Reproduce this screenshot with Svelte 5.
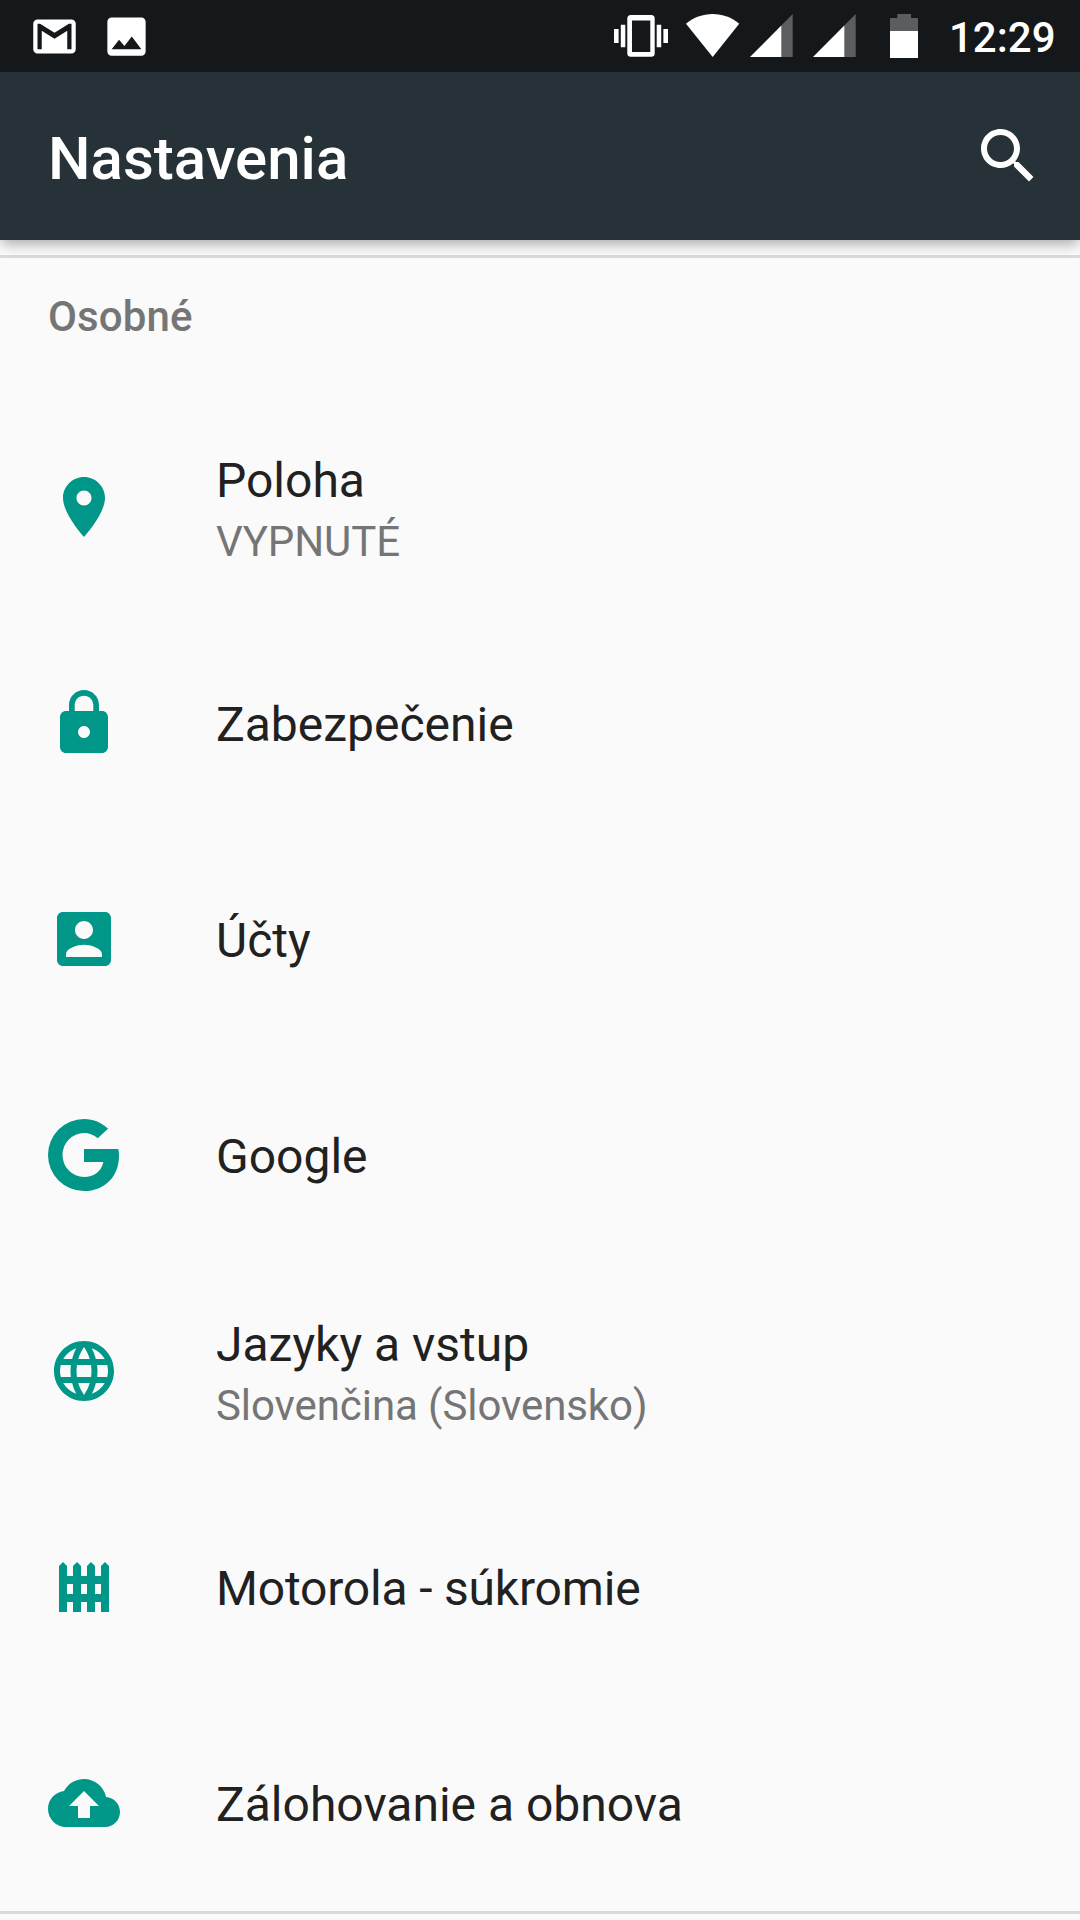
<script>
  const rows = [
    { icon: 'place', title: 'Poloha', summary: 'VYPNUTÉ' },
    { icon: 'lock', title: 'Zabezpečenie' },
    { icon: 'account', title: 'Účty' },
    { icon: 'google', title: 'Google' },
    { icon: 'globe', title: 'Jazyky a vstup', summary: 'Slovenčina (Slovensko)' },
    { icon: 'fence', title: 'Motorola - súkromie', tight: true },
    { icon: 'backup', title: 'Zálohovanie a obnova' }
  ];

  // Each icon has its own grid: 24 units for the common set, 72 for custom marks.
  const icons = {
    place: { box: '0 0 24 24', d: 'M12 2C8.13 2 5 5.13 5 9c0 5.25 7 13 7 13s7-7.75 7-13c0-3.87-3.13-7-7-7zm0 9.5c-1.38 0-2.5-1.12-2.5-2.5s1.12-2.5 2.5-2.5 2.5 1.12 2.5 2.5-1.12 2.5-2.5 2.5z' },
    lock: { box: '0 0 24 24', d: 'M18 8h-1V6c0-2.76-2.24-5-5-5S7 3.24 7 6v2H6c-1.1 0-2 .9-2 2v10c0 1.1.9 2 2 2h12c1.1 0 2-.9 2-2V10c0-1.1-.9-2-2-2zm-6 9c-1.1 0-2-.9-2-2s.9-2 2-2 2 .9 2 2-.9 2-2 2zm3.1-9H8.9V6c0-1.71 1.39-3.1 3.1-3.1 1.71 0 3.1 1.39 3.1 3.1v2z' },
    account: { box: '0 0 24 24', d: 'M3 5v14c0 1.1.89 2 2 2h14c1.1 0 2-.9 2-2V5c0-1.1-.9-2-2-2H5c-1.11 0-2 .9-2 2zm12 4c0 1.66-1.34 3-3 3s-3-1.34-3-3 1.34-3 3-3 3 1.34 3 3zm-9 8c0-2 4-3.1 6-3.1s6 1.1 6 3.1v1H6v-1z' },
    google: { box: '0 0 72 72', d: 'M60 9.7C53.7 3.7 45.5 0 36 0a36 36 0 0 0 0 72c21 0 35-14.7 35-35.3 0-2.4-.2-4.6-.7-6.7H36v13h19.400C53.6 52.200 46 58 36 58a21.500 22 0 0 1 0-44c5.3 0 10 2 13.700 5.300z' },
    globe: { box: '0 0 24 24', d: 'M11.99 2C6.47 2 2 6.48 2 12s4.47 10 9.99 10C17.52 22 22 17.52 22 12S17.52 2 11.99 2zm6.93 6h-2.95c-.32-1.25-.78-2.45-1.38-3.56 1.84.63 3.37 1.91 4.33 3.56zM12 4.04c.83 1.2 1.48 2.53 1.91 3.96h-3.82c.43-1.43 1.08-2.76 1.91-3.96zM4.26 14C4.1 13.36 4 12.69 4 12s.1-1.36.26-2h3.38c-.08.66-.14 1.32-.14 2s.06 1.34.14 2H4.26zm.82 2h2.95c.32 1.25.78 2.45 1.38 3.56-1.84-.63-3.37-1.9-4.33-3.56zm2.95-8H5.08c.96-1.66 2.49-2.93 4.33-3.56C8.81 5.55 8.35 6.75 8.03 8zM12 19.96c-.83-1.2-1.48-2.53-1.91-3.96h3.82c-.43 1.43-1.08 2.76-1.91 3.96zM14.34 14H9.66c-.09-.66-.16-1.32-.16-2s.07-1.35.16-2h4.68c.09.65.16 1.32.16 2s-.07 1.34-.16 2zm.25 5.56c.6-1.11 1.06-2.31 1.38-3.56h2.95c-.96 1.65-2.49 2.93-4.33 3.56zM16.36 14c.08-.66.14-1.32.14-2s-.06-1.34-.14-2h3.38c.16.64.26 1.31.26 2s-.1 1.36-.26 2h-3.38z' },
    fence: { box: '0 0 72 72', d: 'M11 61V15l4-4 4 4v10h6V15l4-4 4 4v10h6V15l4-4 4 4v10h6V15l4-4 4 4v46h-8V51h-6v10h-8V51h-6v10h-8V51h-6v10zM19 33v10h6V33zM33 33v10h6V33zM47 33v10h6V33z' },
    backup: { box: '0 0 24 24', d: 'M19.35 10.04C18.67 6.59 15.64 4 12 4 9.11 4 6.6 5.64 5.35 8.04 2.34 8.36 0 10.91 0 14c0 3.31 2.69 6 6 6h13c2.76 0 5-2.24 5-5 0-2.64-2.05-4.78-4.65-4.96zM14 13v4h-4v-4H7l5-5 5 5h-3z' }
  };
</script>

<main class="screen">
  <div class="status">
    <div class="notifications">
      <svg class="notice" viewBox="0 0 24 24"><path d="M20 4H4c-1.1 0-2 .9-2 2v12c0 1.1.9 2 2 2h16c1.1 0 2-.9 2-2V6c0-1.1-.9-2-2-2zm0 14h-2V9.250L12 13 6 9.250V18H4V6h1.200l6.800 4.250L18.800 6H20v12z" /></svg>
      <svg class="notice" viewBox="0 0 24 24"><path d="M21 19V5c0-1.1-.9-2-2-2H5c-1.1 0-2 .9-2 2v14c0 1.1.9 2 2 2h14c1.1 0 2-.9 2-2zM8.500 13.500l2.500 3.010L14.500 12l4.500 6H5l3.500-4.500z" /></svg>
    </div>
    <div class="indicators">
      <svg class="vibrate" viewBox="0 0 54 42"><path fill-rule="evenodd" d="M0 14h4.600v14H0zM6.800 9.700h4.500v22.600H6.800zM42.700 9.700h4.500v22.600h-4.500zM49.400 14H54v14h-4.600zM16.800 0h20.400a3.500 3.500 0 0 1 3.500 3.500v34.700a3.500 3.500 0 0 1-3.500 3.500H16.800a3.500 3.500 0 0 1-3.500-3.500V3.500A3.500 3.500 0 0 1 16.800 0zM18 5.500V37h18.300V5.500z" /></svg>
      <svg class="wifi" viewBox="0 0 54 43"><path d="M26.700 43 0 9.700C7.500 3.400 16.800 0 26.700 0s19 3.400 26.500 9.700z" /></svg>
      <svg class="signal" viewBox="0 0 43 43"><path class="dim" d="M31 11.700 42.700 0v43H31z" /><path d="M0 43 31.300 11.500V43z" /></svg>
      <svg class="signal" viewBox="0 0 43 43"><path class="dim" d="M31 11.700 42.700 0v43H31z" /><path d="M0 43 31.300 11.500V43z" /></svg>
      <svg class="battery" viewBox="0 0 28 44"><path class="dim" d="M0 4h7.300V0H21v4h7v13H0z" /><path d="M0 17h28v27H0z" /></svg>
      <span class="clock">12:29</span>
    </div>
  </div>

  <header class="toolbar">
    <h1>Nastavenia</h1>
    <svg class="search" viewBox="0 0 24 24"><path d="M15.500 14h-.79l-.28-.27C15.410 12.590 16 11.110 16 9.500 16 5.910 13.090 3 9.500 3S3 5.910 3 9.500 5.910 16 9.500 16c1.610 0 3.090-.59 4.230-1.570l.27.28v.79l5 4.990L20.490 19l-4.990-5zm-6 0C7.010 14 5 11.990 5 9.500S7.010 5 9.500 5 14 7.010 14 9.500 11.990 14 9.500 14z" /></svg>
  </header>

  <section class="category">
    <h2>Osobné</h2>
    {#each rows as row}
      <div class="row">
        <svg class="icon" viewBox={icons[row.icon].box}><path fill-rule="evenodd" d={icons[row.icon].d} /></svg>
        <div class="label" class:double={row.summary}>
          <span class="title" class:tight={row.tight}>{row.title}</span>
          {#if row.summary}<span class="summary">{row.summary}</span>{/if}
        </div>
      </div>
    {/each}
  </section>
  <div class="next"></div>
</main>

<style>
  :global(body) { margin: 0; background: #fafafa; }
  .screen {
    width: 1080px;
    height: 1920px;
    overflow: hidden;
    display: flex;
    flex-direction: column;
    background: #fafafa;
    font-family: Roboto, sans-serif;
  }
  svg { display: block; flex: none; fill: #fff; }
  .status {
    flex: none;
    height: 72px;
    display: flex;
    justify-content: space-between;
    background: #14181b;
    position: relative;
    z-index: 2;
  }
  .notifications { display: flex; align-items: center; gap: 21px; padding-left: 28.5px; }
  .notice { width: 51px; height: 51px; }
  .indicators { display: flex; align-items: flex-start; padding: 14px 24.5px 0 0; }
  .vibrate { width: 54px; height: 42px; margin: 1px 18px 0 0; }
  .wifi { width: 54px; height: 43px; margin-right: 10.5px; }
  .signal { width: 43px; height: 43px; margin-right: 20px; }
  .battery { width: 28px; height: 44px; margin: 0 31px 0 13.5px; }
  .dim { fill: #5b5d5f; }
  .clock { font-size: 42px; line-height: 48px; font-weight: 500; color: #fff; }
  .toolbar {
    flex: none;
    height: 168px;
    box-sizing: border-box;
    padding: 0 36px 0 48px;
    display: flex;
    align-items: center;
    justify-content: space-between;
    background: #263238;
    position: relative;
    box-shadow: 0 6px 12px -2px rgba(0, 0, 0, 0.32);
  }
  h1 { margin: 0; padding-top: 5px; font-size: 60px; line-height: 70px; font-weight: 500; color: #fff; }
  .search { width: 72px; height: 72px; }
  .category { flex: none; margin-top: 15px; border-top: 3px solid #dadada; }
  h2 {
    margin: 0;
    height: 141px;
    box-sizing: border-box;
    padding: 34px 48px 0;
    font-size: 42px;
    line-height: 50px;
    font-weight: 500;
    letter-spacing: 0.12px;
    color: #757575;
  }
  .row { height: 216px; padding-left: 48px; display: flex; align-items: center; gap: 96px; }
  .icon { width: 72px; height: 72px; fill: #009688; }
  .label { display: flex; flex-direction: column; padding-top: 4px; }
  .label.double { padding-top: 7px; gap: 2px; }
  .title { font-size: 48px; line-height: 60px; color: #212121; }
  .title.tight { letter-spacing: -0.18px; }
  .summary { font-size: 42px; line-height: 58px; letter-spacing: -0.08px; color: #757575; }
  .next { flex: 1; border-top: 3px solid #dadada; }
</style>
